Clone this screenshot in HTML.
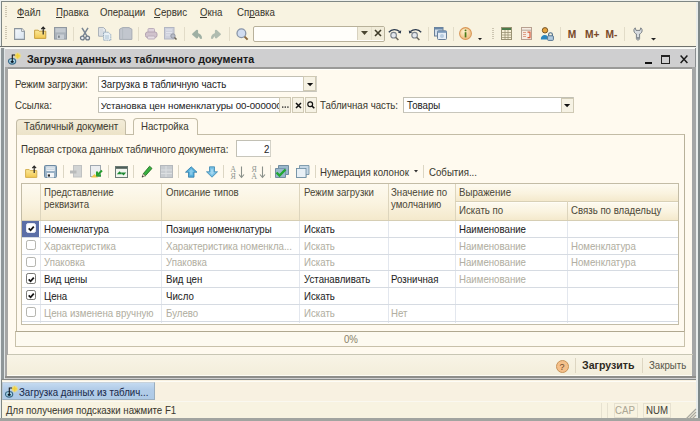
<!DOCTYPE html>
<html><head><meta charset="utf-8"><style>
*{margin:0;padding:0;box-sizing:border-box}
html,body{width:700px;height:421px;overflow:hidden;background:#f8f3e1;font-family:"Liberation Sans",sans-serif;font-size:9.7px;color:#1e1e1e}
.a{position:absolute}
.t{position:absolute;line-height:12px;white-space:nowrap;-webkit-text-stroke:0.05px currentColor}
.g{color:#b2afa2}
.lb{color:#3c3a30}
svg{position:absolute;overflow:visible}
</style></head><body>
<div class="a" style="left:0px;top:0px;width:700px;height:1.2px;background:#eef0ec"></div>
<div class="a" style="left:0px;top:0px;width:1px;height:421px;background:#eaeeee"></div>
<div class="a" style="left:1px;top:1.2px;width:697.2px;height:1px;background:#7f8784"></div>
<div class="a" style="left:1px;top:1.2px;width:1.1px;height:420px;background:#7f8784"></div>
<div class="a" style="left:696.4px;top:2.2px;width:1.6px;height:419px;background:#e8eceb"></div>
<div class="a" style="left:698px;top:1.2px;width:2px;height:420px;background:#7e8889"></div>
<div class="a" style="left:4.5px;top:5.5px;width:2.5px;height:11.5px;background:repeating-linear-gradient(#cdc6b2 0 1px,transparent 1px 2px)"></div>
<div class="t lb" style="left:17px;top:7.40px;font-size:10.4px;transform:scaleX(0.93);transform-origin:0 0;">Файл</div>
<div class="a" style="left:17px;top:17.1px;width:7px;height:1px;background:#3c3a30"></div>
<div class="t lb" style="left:55.6px;top:7.40px;font-size:10.4px;transform:scaleX(0.93);transform-origin:0 0;">Правка</div>
<div class="a" style="left:55.6px;top:17.1px;width:6px;height:1px;background:#3c3a30"></div>
<div class="t lb" style="left:99.6px;top:7.40px;font-size:10.4px;transform:scaleX(0.93);transform-origin:0 0;">Операции</div>
<div class="t lb" style="left:154.4px;top:7.40px;font-size:10.4px;transform:scaleX(0.93);transform-origin:0 0;">Сервис</div>
<div class="a" style="left:154.4px;top:17.1px;width:6px;height:1px;background:#3c3a30"></div>
<div class="t lb" style="left:200px;top:7.40px;font-size:10.4px;transform:scaleX(0.93);transform-origin:0 0;">Окна</div>
<div class="a" style="left:200px;top:17.1px;width:7px;height:1px;background:#3c3a30"></div>
<div class="t lb" style="left:237px;top:7.40px;font-size:10.4px;transform:scaleX(0.93);transform-origin:0 0;">Справка</div>
<div class="a" style="left:249px;top:17.1px;width:6px;height:1px;background:#3c3a30"></div>
<div class="a" style="left:4.5px;top:25.5px;width:2.5px;height:13.5px;background:repeating-linear-gradient(#cdc6b2 0 1px,transparent 1px 2px)"></div>
<div class="a" style="left:72.6px;top:27px;width:1px;height:14px;background:#e2dcc8"></div>
<div class="a" style="left:137.8px;top:27px;width:1px;height:14px;background:#e2dcc8"></div>
<div class="a" style="left:183.8px;top:27px;width:1px;height:14px;background:#e2dcc8"></div>
<div class="a" style="left:228.8px;top:27px;width:1px;height:14px;background:#e2dcc8"></div>
<div class="a" style="left:427.6px;top:27px;width:1px;height:14px;background:#e2dcc8"></div>
<div class="a" style="left:452.7px;top:27px;width:1px;height:14px;background:#e2dcc8"></div>
<div class="a" style="left:559.7px;top:27px;width:1px;height:14px;background:#e2dcc8"></div>
<div class="a" style="left:624.3px;top:27px;width:1px;height:14px;background:#e2dcc8"></div>
<svg style="left:14.3px;top:27.799999999999997px" width="11" height="12" viewBox="0 0 11 12"><defs><linearGradient id="nd" x1="0" y1="0" x2="1" y2="1"><stop offset="0" stop-color="#f4f8fc"/><stop offset="1" stop-color="#d8e4f0"/></linearGradient></defs><path d="M0.6 0.6h7.2l2.6 2.6v8.2H0.6z" fill="url(#nd)" stroke="#8a949c" stroke-width="1.1"/><path d="M7.6 0.6v2.8h2.8" fill="#fff" stroke="#8a949c" stroke-width="0.9"/></svg>
<svg style="left:34px;top:26.4px" width="13" height="13" viewBox="0 0 13 13"><defs><linearGradient id="of" x1="0" y1="0" x2="0" y2="1"><stop offset="0" stop-color="#fbe89a"/><stop offset="1" stop-color="#f2c850"/></linearGradient></defs><path d="M0.6 4.2h3.6l1 1h6.6v7.2H0.6z" fill="url(#of)" stroke="#c8a040" stroke-width="1"/><path d="M9.2 8.5V1.2M7.3 3.2l1.9-2 1.9 2" fill="none" stroke="#222" stroke-width="1.2"/></svg>
<svg style="left:53.6px;top:26.799999999999997px" width="13" height="12.6" viewBox="0 0 13 12.6"><rect x="0.5" y="0.5" width="12" height="11.6" fill="#aab2ba" stroke="#9098a0"/><rect x="1.5" y="1.2" width="10" height="4.2" fill="#c4cad0"/><rect x="3" y="7.5" width="7" height="4.6" fill="#c8ced4"/><rect x="4" y="8.6" width="1.8" height="2.2" fill="#7a8288"/></svg>
<svg style="left:79.8px;top:26.799999999999997px" width="10" height="13.5" viewBox="0 0 10 13.5"><path d="M2 0.8l5 8.4M8 0.8l-5 8.4" stroke="#7a8694" stroke-width="1.5" fill="none"/><circle cx="2.4" cy="11" r="1.9" fill="#eef0f2" stroke="#6e7a88" stroke-width="1.3"/><circle cx="7.6" cy="11" r="1.9" fill="#eef0f2" stroke="#6e7a88" stroke-width="1.3"/></svg>
<svg style="left:98.2px;top:26.799999999999997px" width="13.5" height="13.5" viewBox="0 0 13.5 13.5"><path d="M0.6 0.6h5l2 2v6.6H0.6z" fill="#e4e8ec" stroke="#a6aeb6" stroke-width="1"/><path d="M2 3h3M2 5h4M2 7h4" stroke="#c4ccd4" stroke-width="0.8"/><path d="M5.6 5.2h4.8l2.4 2.4v5.6H5.6z" fill="#e8f0f6" stroke="#8ea4b8" stroke-width="1" stroke-dasharray="1.2 0.6"/><path d="M7 9h4M7 11h4" stroke="#9ab4c8" stroke-width="0.8"/></svg>
<svg style="left:118.6px;top:27.0px" width="13.5" height="13" viewBox="0 0 13.5 13"><path d="M0.6 2.2l3-1.6h6.4l2.9 1.6v10.2H0.6z" fill="#c2c6ce" stroke="#a6acb4" stroke-width="1"/><path d="M3.6 0.6v11.8" stroke="#b0b6be" stroke-width="0.8"/></svg>
<svg style="left:145px;top:27.9px" width="12.5" height="11.5" viewBox="0 0 12.5 11.5"><rect x="3" y="0.5" width="6.5" height="4.5" rx="1" fill="#ddd2dc" stroke="#bcaebb"/><rect x="0.5" y="4" width="11.5" height="5.5" rx="2" fill="#d0c2cc" stroke="#b4a4b2"/><rect x="2.5" y="8" width="7.5" height="3" rx="1" fill="#e6dee4" stroke="#bcaebb"/></svg>
<svg style="left:164.2px;top:27.2px" width="13" height="13" viewBox="0 0 13 13"><rect x="0.5" y="0.5" width="9.5" height="11.5" fill="#cdd0dc" stroke="#b2b6c2"/><path d="M2 3h6M2 5.5h6M2 8h4" stroke="#e2e4ec" stroke-width="1"/><circle cx="9" cy="9" r="2.2" fill="#b8bcc8" stroke="#8a8e98" stroke-width="0.8"/><path d="M10.5 10.5l2 2" stroke="#6a6458" stroke-width="1.6"/></svg>
<svg style="left:192px;top:29.599999999999998px" width="10" height="10" viewBox="0 0 10 10"><path d="M9 8.8c0-3.6-2.6-4.6-5.2-4.6M5 0.8L1.2 4.2 5 7.4z" fill="#9fb0a4" stroke="#9fb0a4" stroke-width="2.2" stroke-linejoin="round"/></svg>
<svg style="left:210.8px;top:29.599999999999998px" width="10" height="10" viewBox="0 0 10 10"><path d="M1 8.8c0-3.6 2.6-4.6 5.2-4.6M5 0.8l3.8 3.4L5 7.4z" fill="#b0bcb0" stroke="#b0bcb0" stroke-width="2.2" stroke-linejoin="round"/></svg>
<svg style="left:235.8px;top:28.0px" width="13" height="13" viewBox="0 0 13 13"><circle cx="5.4" cy="5.2" r="4.4" fill="#d0dcf0" stroke="#8a96a8" stroke-width="1.3"/><path d="M8.6 8.6l3 3" stroke="#8b6a40" stroke-width="2"/></svg>
<div class="a" style="left:252.9px;top:25.8px;width:132px;height:16.2px;background:#fffefa;border:1px solid #b8b19a;border-radius:2px"></div>
<div class="a" style="left:357.3px;top:26.8px;width:1px;height:13.4px;background:#d8d2bf"></div>
<div class="a" style="left:370.6px;top:26.8px;width:1px;height:13.4px;background:#e4dfcc"></div>
<div class="a" style="left:358.3px;top:26.8px;width:12.3px;height:13.4px;background:#f1ecd9"></div>
<div class="a" style="left:371.6px;top:26.8px;width:12.7px;height:13.4px;background:#f1ecd9"></div>
<svg style="left:361px;top:30.9px" width="7" height="4" viewBox="0 0 7 4"><path d="M0 0h7l-3.5 4z" fill="#4a4530"/></svg>
<svg style="left:374px;top:28.9px" width="8" height="8" viewBox="0 0 8 8"><path d="M1 1l6 6M7 1l-6 6" stroke="#3e3a28" stroke-width="1.6"/></svg>
<svg style="left:388px;top:27.799999999999997px" width="14" height="13" viewBox="0 0 14 13"><path d="M0.8 4.2c3-3.2 7.5-3.4 10.8-0.6" fill="none" stroke="#2e3c50" stroke-width="1.3"/><path d="M13.2 2.2l-0.4 3.4-3-1.2z" fill="#2e3c50"/><circle cx="5.6" cy="7.2" r="2.8" fill="#e4e8ee" stroke="#7a828c" stroke-width="1.1"/><path d="M7.6 9.2l2.8 2.8" stroke="#6e6a60" stroke-width="1.6"/></svg>
<svg style="left:407.8px;top:27.799999999999997px" width="14" height="13" viewBox="0 0 14 13"><path d="M13.2 4.2c-3-3.2-7.5-3.4-10.8-0.6" fill="none" stroke="#2e3c50" stroke-width="1.3"/><path d="M0.8 2.2l0.4 3.4 3-1.2z" fill="#2e3c50"/><circle cx="6.6" cy="7.2" r="2.8" fill="#e4e8ee" stroke="#7a828c" stroke-width="1.1"/><path d="M8.6 9.2l2.8 2.8" stroke="#6e6a60" stroke-width="1.6"/></svg>
<svg style="left:434px;top:27.0px" width="13" height="13" viewBox="0 0 13 13"><rect x="0.5" y="0.5" width="8.5" height="8.5" fill="#d4e0ec" stroke="#6a8098"/><rect x="0.5" y="0.5" width="8.5" height="2" fill="#6a88a8"/><rect x="3.5" y="3.8" width="9" height="8.7" rx="1" fill="#e6eef6" stroke="#6a8098"/><rect x="3.5" y="3.8" width="9" height="2" fill="#7a98b8"/><circle cx="8" cy="9" r="2" fill="#b8cce0"/></svg>
<svg style="left:458.5px;top:26.599999999999998px" width="13" height="13" viewBox="0 0 13 13"><defs><radialGradient id="inf" cx="0.4" cy="0.35"><stop offset="0" stop-color="#fff4d0"/><stop offset="1" stop-color="#f2c890"/></radialGradient></defs><circle cx="6.5" cy="6.5" r="5.9" fill="url(#inf)" stroke="#d89858" stroke-width="1.1"/><rect x="5.7" y="5.2" width="1.7" height="5.2" fill="#4a7a1a"/><circle cx="6.55" cy="3.4" r="0.95" fill="#4a7a1a"/></svg>
<svg style="left:478.4px;top:38.0px" width="4" height="2.2" viewBox="0 0 4 2.2"><path d="M0 0h4l-2 2.2z" fill="#222"/></svg>
<div class="a" style="left:492.2px;top:27.5px;width:2px;height:11px;background:repeating-linear-gradient(#cdc6b2 0 1px,transparent 1px 2px)"></div>
<svg style="left:500.6px;top:26.9px" width="11" height="13" viewBox="0 0 11 13"><rect x="0.5" y="0.5" width="10" height="12" fill="#f7efd6" stroke="#9a9274"/><rect x="1" y="1" width="9" height="2" fill="#4a7a4a"/><path d="M1 5.5h9M1 8h9M1 10.5h9M4 3v9M7 3v9" stroke="#9a9274" stroke-width="0.8"/></svg>
<svg style="left:521px;top:26.9px" width="11" height="13" viewBox="0 0 11 13"><rect x="0.5" y="0.5" width="10" height="12" fill="#f6ece2" stroke="#b8a090"/><path d="M1 3.2h9" stroke="#a89888" stroke-width="0.8"/><path d="M2 5.5h3M2 7.5h3M2 9.5h3" stroke="#e0a088" stroke-width="1"/><path d="M6.5 5.2h2.5v5.5h-2.5" fill="none" stroke="#d85a3a" stroke-width="1.2"/></svg>
<svg style="left:540.4px;top:26.599999999999998px" width="14" height="14" viewBox="0 0 14 14"><circle cx="5" cy="3.3" r="2.7" fill="#e6a440" stroke="#6a4a20" stroke-width="0.9"/><path d="M0.8 12.5c0-3 1.5-4.6 4-4.6 1 0 1.8.3 2.4.8v3.8z" fill="#2a86c0"/><path d="M8.6 9V7.6a1.9 1.9 0 0 1 3.8 0V9" fill="none" stroke="#4a6a88" stroke-width="1.1"/><rect x="7.6" y="8.8" width="5.8" height="4.6" rx="0.8" fill="#b4cce0" stroke="#4a6a88" stroke-width="0.9"/></svg>
<div class="t " style="left:567.7px;top:28.50px;font-size:10.2px;font-weight:bold;color:#7a4a2a">M</div>
<div class="t " style="left:585px;top:28.50px;font-size:10.2px;font-weight:bold;color:#7a4a2a">M+</div>
<div class="t " style="left:605.6px;top:28.50px;font-size:10.2px;font-weight:bold;color:#7a4a2a">M-</div>
<svg style="left:632.6px;top:26.799999999999997px" width="10" height="13.4" viewBox="0 0 10 13.4"><path d="M2.2 0.8C0.8 1.8 0.6 3.6 1.2 5c.6 1.2 1.6 1.8 2.2 2v4.6c0 .9.7 1.4 1.6 1.4s1.6-.5 1.6-1.4V7c.6-.2 1.6-.8 2.2-2 .6-1.4.4-3.2-1-4.2L7 3.4H3z" fill="#d8dce0" stroke="#6e757c" stroke-width="0.9" stroke-linejoin="round"/><circle cx="5" cy="11" r="0.9" fill="#6e757c"/></svg>
<svg style="left:650.5px;top:37.6px" width="5" height="2.4" viewBox="0 0 5 2.4"><path d="M0 0h5l-2.5 2.4z" fill="#222"/></svg>
<div class="a" style="left:0px;top:45.9px;width:696.4px;height:1.4px;background:#6f716d"></div>
<div class="a" style="left:0px;top:47.3px;width:696.4px;height:1.8px;background:#f4f4ee"></div>
<div class="a" style="left:1px;top:47.9px;width:2.8px;height:332.1px;background:#8e9698"></div>
<div class="a" style="left:3.8px;top:47.9px;width:1px;height:332.1px;background:#dfe5e6"></div>
<div class="a" style="left:695px;top:47.9px;width:1.2px;height:20px;background:#8a8e90"></div>
<div class="a" style="left:4.8px;top:49.1px;width:690.2px;height:19px;background:#cfcfd0"></div>
<div class="a" style="left:4.8px;top:47.9px;width:690.2px;height:1.2px;background:#fbfbf8"></div>
<div class="a" style="left:4.8px;top:67.4px;width:687px;height:1.5px;background:#9a9a98"></div>
<div class="a" style="left:4.8px;top:67.4px;width:3.1px;height:309px;background:#a6a6a4"></div>
<div class="a" style="left:691.7px;top:67.4px;width:4.3px;height:311px;background:#a4a6a6"></div>
<div class="a" style="left:7.9px;top:68.9px;width:0.5px;height:307px;background:#f2f2ec"></div>
<div class="a" style="left:8.3px;top:68.9px;width:683.4px;height:306.8px;background:#fffaef"></div>
<div class="a" style="left:8.3px;top:68.9px;width:683.4px;height:1.2px;background:#fffffb"></div>
<div class="a" style="left:4.8px;top:375.9px;width:691.2px;height:1.7px;background:#8e8e8a"></div>
<div class="a" style="left:4.8px;top:377.6px;width:691.2px;height:1.1px;background:#cfcfcf"></div>
<div class="a" style="left:1px;top:378.7px;width:695.2px;height:1.4px;background:#858987"></div>
<svg style="left:8.2px;top:52px" width="14" height="13" viewBox="0 0 14 13"><defs><radialGradient id="sg82"><stop offset="0" stop-color="#fff8a0"/><stop offset="0.45" stop-color="#f4dc60"/><stop offset="1" stop-color="#f0e0a0" stop-opacity="0"/></radialGradient></defs><circle cx="9.7" cy="3.9" r="4.2" fill="url(#sg82)"/><path d="M9.7 0.9l0.9 2.1 2.1 0.9-2.1 0.9-0.9 2.1-0.9-2.1-2.1-0.9 2.1-0.9z" fill="#f0d040"/><ellipse cx="4.1" cy="9.3" rx="3.6" ry="2.8" fill="#a6d4e8" stroke="#3a6a88" stroke-width="1.2"/><path d="M4.3 9.3V3h2.8" fill="none" stroke="#1a1a1a" stroke-width="1.1"/><ellipse cx="4.2" cy="9.8" rx="1.7" ry="1.1" fill="#0a1a2a"/></svg>
<div class="t " style="left:26.9px;top:52.90px;font-size:10.7px;font-weight:bold;color:#1a1a1a">Загрузка данных из табличного документа</div>
<div class="a" style="left:645px;top:62px;width:7px;height:1.8px;background:#111"></div>
<div class="a" style="left:660.5px;top:54.6px;width:9.5px;height:9px;border:1.5px solid #222;border-top-width:2px"></div>
<svg style="left:680px;top:55px" width="8" height="8.5" viewBox="0 0 8 8.5"><path d="M0.6 0.6l6.8 7.3M7.4 0.6l-6.8 7.3" stroke="#1a1a1a" stroke-width="1.5"/></svg>
<div class="t lb" style="left:15px;top:79.10px;font-size:10.4px;transform:scaleX(0.93);transform-origin:0 0;">Режим загрузки:</div>
<div class="a" style="left:98px;top:75.7px;width:218.5px;height:16.4px;background:#fff;border:1px solid #c2c0b4;border-right-color:#d4d2c8;border-bottom-color:#c8c6bc"></div>
<div class="t " style="left:100.7px;top:79.10px;font-size:10.4px;transform:scaleX(0.93);transform-origin:0 0;">Загрузка в табличную часть</div>
<div class="a" style="left:303.2px;top:76.2px;width:13px;height:15.2px;background:#f6f2e4;border:1px solid #cfc9b4"></div>
<svg style="left:306.9px;top:83px" width="6.2" height="3.2" viewBox="0 0 6.2 3.2"><path d="M0 0h6.2l-3.1 3.2z" fill="#111"/></svg>
<div class="t lb" style="left:15px;top:100.30px;font-size:10.4px;transform:scaleX(0.93);transform-origin:0 0;">Ссылка:</div>
<div class="a" style="left:98px;top:97.2px;width:181.5px;height:16.2px;background:#fff;border:1px solid #c2c0b4;border-right-color:#d4d2c8;border-bottom-color:#c8c6bc"></div>
<div class="a" style="left:100.7px;top:98px;width:178px;height:14px;overflow:hidden">
<div class="t" style="left:0;top:1.93px">Установка цен номенклатуры 00-000000</div></div>
<div class="a" style="left:279.4px;top:97.2px;width:12px;height:16.2px;background:#f6f2e4;border:1px solid #cfc9b4"></div>
<svg style="left:282.3px;top:106px" width="7" height="2" viewBox="0 0 7 2"><rect x="0" y="0.4" width="1.4" height="1.4" fill="#333"/><rect x="2.6" y="0.4" width="1.4" height="1.4" fill="#333"/><rect x="5.2" y="0.4" width="1.4" height="1.4" fill="#333"/></svg>
<div class="a" style="left:292px;top:97.2px;width:12.3px;height:16.2px;background:#f6f2e4;border:1px solid #cfc9b4"></div>
<svg style="left:294.5px;top:101.5px" width="7" height="7" viewBox="0 0 7 7"><path d="M1 1l5 5M6 1l-5 5" stroke="#111" stroke-width="1.5"/></svg>
<div class="a" style="left:304.6px;top:97.2px;width:12px;height:16.2px;background:#f6f2e4;border:1px solid #cfc9b4"></div>
<svg style="left:306.8px;top:100.8px" width="8" height="8" viewBox="0 0 8 8"><circle cx="3.2" cy="3.2" r="2.4" fill="none" stroke="#111" stroke-width="1.2"/><path d="M5 5l2.3 2.3" stroke="#111" stroke-width="1.6"/></svg>
<div class="t lb" style="left:320px;top:100.30px;font-size:10.4px;transform:scaleX(0.93);transform-origin:0 0;">Табличная часть:</div>
<div class="a" style="left:403.4px;top:97.4px;width:171px;height:16px;background:#fff;border:1px solid #c2c0b4;border-right-color:#d4d2c8;border-bottom-color:#c8c6bc"></div>
<div class="t " style="left:406.9px;top:100.30px;font-size:10.4px;transform:scaleX(0.93);transform-origin:0 0;">Товары</div>
<div class="a" style="left:561px;top:97.9px;width:12.7px;height:15px;background:#f6f2e4;border:1px solid #cfc9b4"></div>
<svg style="left:564.3px;top:104px" width="6.2" height="3.2" viewBox="0 0 6.2 3.2"><path d="M0 0h6.2l-3.1 3.2z" fill="#111"/></svg>
<div class="a" style="left:15.9px;top:134.2px;width:669px;height:197.6px;border:1px solid #c3bca6;border-right-color:#b8b19a;border-bottom-color:#b0a890;background:#fffaef"></div>
<div class="a" style="left:15.9px;top:118.8px;width:110px;height:16px;background:linear-gradient(#f3ecd8,#ece3c8);border:1px solid #c3bca6;border-bottom:none;border-radius:4px 4px 0 0"></div>
<div class="t lb" style="left:24.4px;top:121.30px;font-size:10.4px;transform:scaleX(0.93);transform-origin:0 0;">Табличный документ</div>
<div class="a" style="left:132.9px;top:118.2px;width:65.5px;height:17.2px;background:#fffaef;border:1px solid #c3bca6;border-bottom:none;border-radius:4px 4px 0 0"></div>
<div class="t lb" style="left:141.4px;top:121.30px;font-size:10.4px;transform:scaleX(0.93);transform-origin:0 0;">Настройка</div>
<div class="t lb" style="left:21.4px;top:143.60px;font-size:10.4px;transform:scaleX(0.93);transform-origin:0 0;">Первая строка данных табличного документа:</div>
<div class="a" style="left:235.7px;top:140.3px;width:35.7px;height:16.3px;background:#fff;border:1px solid #c2c0b4;border-right-color:#d4d2c8;border-bottom-color:#c8c6bc"></div>
<div class="t " style="left:263.5px;top:143.60px;font-size:10.4px;transform:scaleX(0.93);transform-origin:0 0;">2</div>
<div class="a" style="left:63px;top:165px;width:1px;height:13px;background:#dcd6c4"></div>
<div class="a" style="left:108.4px;top:165px;width:1px;height:13px;background:#dcd6c4"></div>
<div class="a" style="left:133.4px;top:165px;width:1px;height:13px;background:#dcd6c4"></div>
<div class="a" style="left:178.4px;top:165px;width:1px;height:13px;background:#dcd6c4"></div>
<div class="a" style="left:223px;top:165px;width:1px;height:13px;background:#dcd6c4"></div>
<div class="a" style="left:269.6px;top:165px;width:1px;height:13px;background:#dcd6c4"></div>
<div class="a" style="left:314.6px;top:165px;width:1px;height:13px;background:#dcd6c4"></div>
<div class="a" style="left:423px;top:165px;width:1px;height:13px;background:#dcd6c4"></div>
<svg style="left:25.1px;top:165px" width="13" height="13" viewBox="0 0 13 13"><path d="M0.6 4.6h3.6l1 1h6.6v6.8H0.6z" fill="url(#of)" stroke="#d4b050" stroke-width="1"/><path d="M9.2 8V1.2M7.3 3.2l1.9-2 1.9 2" fill="none" stroke="#2a2a2a" stroke-width="1.2"/></svg>
<svg style="left:44.4px;top:165px" width="13" height="13" viewBox="0 0 13 13"><rect x="0.5" y="0.5" width="12" height="12" rx="1" fill="#9ab2c6" stroke="#6d8aa2"/><rect x="2.3" y="1.4" width="8.4" height="4.6" fill="#eef2f6"/><path d="M3 2.8h7M3 4.4h7" stroke="#b8c8d6" stroke-width="0.7"/><rect x="3" y="8" width="7" height="4.5" fill="#f4f6f8"/><rect x="3.8" y="9.4" width="2.2" height="2.2" fill="#2a2a2a"/></svg>
<svg style="left:69.5px;top:165px" width="12" height="13" viewBox="0 0 12 13"><rect x="3.5" y="0.5" width="8" height="11.5" fill="#d2d4d4" stroke="#c0c2c2"/><path d="M0 7h6.5" stroke="#b8baba" stroke-width="3"/></svg>
<svg style="left:90px;top:165px" width="13" height="13" viewBox="0 0 13 13"><rect x="0.5" y="0.5" width="10" height="11" fill="#eceef0" stroke="#a0a8b0"/><path d="M1 12.5l3.5-3.5 3.5 3.5z" fill="#f0c850"/><path d="M12 5.5l-4.8 4.8M7 6.5v4h4" fill="none" stroke="#28a030" stroke-width="2"/></svg>
<svg style="left:114.8px;top:165.8px" width="13" height="12" viewBox="0 0 13 12"><rect x="0.5" y="0.5" width="12" height="11" fill="#f2f6f0" stroke="#6a7a74"/><rect x="1" y="1" width="11" height="1.8" fill="#4e5e58"/><path d="M1.8 8.2L4.6 5.2 7.4 8.2z" fill="#1e8a34"/><path d="M5.8 6.4h5.4L8.5 9.4z" fill="#1e8a34"/></svg>
<svg style="left:141px;top:165px" width="11" height="13" viewBox="0 0 11 13"><path d="M2.2 8.8L8.6 1.2l2.4 2.2-6.6 7.4z" fill="#38b040" stroke="#1a6a1a" stroke-width="0.8"/><path d="M2.2 8.8l2.2 2L1 12.2z" fill="#f0e8d0" stroke="#5a5a4a" stroke-width="0.6"/><path d="M1 12.2l0.6-1.6 1 1z" fill="#222"/></svg>
<svg style="left:159.8px;top:165px" width="13" height="13" viewBox="0 0 13 13"><rect x="0.5" y="0.5" width="12" height="12" fill="#c8ccd0" stroke="#b4b8bc"/><path d="M1 5h11M1 8.5h11M6 1v11" stroke="#dde0e2" stroke-width="1"/></svg>
<svg style="left:185px;top:165.5px" width="12.5" height="12" viewBox="0 0 12.5 12"><path d="M6.25 0.8L12 6.2H9v5H3.5v-5H0.5z" fill="#58b0dc" stroke="#2f7aa6" stroke-width="0.8" stroke-linejoin="round"/><path d="M6.25 3L9 5.8H7.5v3h-2.5v-3H3.5z" fill="#a8dcf4" opacity="0.6"/></svg>
<svg style="left:205.7px;top:165.5px" width="12" height="12" viewBox="0 0 12 12"><path d="M6 11.2L11.5 5.8H8.5v-5h-5v5H0.5z" fill="#78c0e4" stroke="#3a86b0" stroke-width="0.8" stroke-linejoin="round"/><path d="M6 9L8.5 6.2H7v-3H5v3H3.5z" fill="#c0e6f8" opacity="0.6"/></svg>
<svg style="left:230px;top:164.5px" width="15" height="14" viewBox="0 0 15 14"><text x="0.2" y="6.6" font-size="8" fill="#8f968f" font-family="Liberation Serif">A</text><text x="0.6" y="13.8" font-size="8" fill="#8f968f" font-family="Liberation Serif">Я</text><path d="M11.5 1.5v10.5M9 9.5l2.5 3 2.5-3" fill="none" stroke="#8a908a" stroke-width="1.1"/></svg>
<svg style="left:250.7px;top:164.5px" width="15" height="14" viewBox="0 0 15 14"><text x="0.6" y="6.6" font-size="8" fill="#8f968f" font-family="Liberation Serif">Я</text><text x="0.2" y="13.8" font-size="8" fill="#8f968f" font-family="Liberation Serif">A</text><path d="M11.5 1.5v10.5M9 9.5l2.5 3 2.5-3" fill="none" stroke="#8a908a" stroke-width="1.1"/></svg>
<svg style="left:274.8px;top:165px" width="14.5" height="13" viewBox="0 0 14.5 13"><path d="M3.5 0.5h10v9h-3v3h-10v-9h3z" fill="#9ab8cc" stroke="#5a7a90" stroke-width="0.8"/><path d="M3.5 3.5h7v6" fill="none" stroke="#6a8aa0" stroke-width="0.7"/><path d="M1.5 7.5l3 3 6-6" fill="none" stroke="#22a832" stroke-width="2.4"/></svg>
<svg style="left:296px;top:165px" width="13.5" height="13" viewBox="0 0 13.5 13"><path d="M3.5 0.5h9.5v9h-3v3h-9.5v-9h3z" fill="#c4d6e4" stroke="#6a8aa0" stroke-width="0.8"/><rect x="0.5" y="3.5" width="9.5" height="9" fill="#e8f0f6" stroke="#6a8aa0" stroke-width="0.8"/></svg>
<div class="t lb" style="left:320.4px;top:167.00px;font-size:10.4px;transform:scaleX(0.93);transform-origin:0 0;">Нумерация колонок</div>
<svg style="left:414px;top:170px" width="4" height="2.5" viewBox="0 0 4 2.5"><path d="M0 0h4l-2 2.5z" fill="#333"/></svg>
<div class="t lb" style="left:429px;top:167.00px;font-size:10.4px;transform:scaleX(0.93);transform-origin:0 0;">События...</div>
<div class="a" style="left:21.4px;top:182.6px;width:657.8000000000001px;height:142.20000000000002px;background:#fff;border:1px solid #c3bca6"></div>
<div class="a" style="left:22.4px;top:183.6px;width:432.6px;height:36.5px;background:linear-gradient(#fdfaf0,#faf3df 55%,#f4e9cc)"></div>
<div class="a" style="left:456px;top:183.6px;width:222.20000000000005px;height:17.30000000000001px;background:linear-gradient(#fdfaf0,#faf3df 55%,#f4e9cc)"></div>
<div class="a" style="left:456px;top:201.9px;width:222.20000000000005px;height:18.19999999999999px;background:linear-gradient(#fdfaf0,#faf3df 55%,#f4e9cc)"></div>
<div class="a" style="left:456px;top:201.9px;width:222.20000000000005px;height:1px;background:#fffdf6"></div>
<div class="a" style="left:22.4px;top:219.5px;width:655.8000000000001px;height:1.2px;background:#d6ceb4"></div>
<div class="a" style="left:39.5px;top:183.6px;width:1px;height:36.5px;background:#ddd5bd"></div>
<div class="a" style="left:161.4px;top:183.6px;width:1px;height:36.5px;background:#ddd5bd"></div>
<div class="a" style="left:298.6px;top:183.6px;width:1px;height:36.5px;background:#ddd5bd"></div>
<div class="a" style="left:387.9px;top:183.6px;width:1px;height:36.5px;background:#ddd5bd"></div>
<div class="a" style="left:455px;top:183.6px;width:1px;height:36.5px;background:#ddd5bd"></div>
<div class="a" style="left:455px;top:200.9px;width:223.20000000000005px;height:1px;background:#d8d0b6"></div>
<div class="a" style="left:567px;top:201.4px;width:1px;height:18.69999999999999px;background:#ddd5bd"></div>
<div class="t " style="left:44.2px;top:186.90px;font-size:10.4px;transform:scaleX(0.93);transform-origin:0 0;color:#4e4a3a;-webkit-text-stroke:0.04px">Представление</div>
<div class="t " style="left:44.2px;top:198.60px;font-size:10.4px;transform:scaleX(0.93);transform-origin:0 0;color:#4e4a3a;-webkit-text-stroke:0.04px">реквизита</div>
<div class="t " style="left:165.7px;top:186.90px;font-size:10.4px;transform:scaleX(0.93);transform-origin:0 0;color:#4e4a3a;-webkit-text-stroke:0.04px">Описание типов</div>
<div class="t " style="left:303.6px;top:186.90px;font-size:10.4px;transform:scaleX(0.93);transform-origin:0 0;color:#4e4a3a;-webkit-text-stroke:0.04px">Режим загрузки</div>
<div class="t " style="left:391.4px;top:186.90px;font-size:10.4px;transform:scaleX(0.93);transform-origin:0 0;color:#4e4a3a;-webkit-text-stroke:0.04px">Значение по</div>
<div class="t " style="left:391.4px;top:198.60px;font-size:10.4px;transform:scaleX(0.93);transform-origin:0 0;color:#4e4a3a;-webkit-text-stroke:0.04px">умолчанию</div>
<div class="t " style="left:459.3px;top:186.90px;font-size:10.4px;transform:scaleX(0.93);transform-origin:0 0;color:#4e4a3a;-webkit-text-stroke:0.04px">Выражение</div>
<div class="t " style="left:459.3px;top:205.40px;font-size:10.4px;transform:scaleX(0.93);transform-origin:0 0;color:#4e4a3a;-webkit-text-stroke:0.04px">Искать по</div>
<div class="t " style="left:570.7px;top:205.40px;font-size:10.4px;transform:scaleX(0.93);transform-origin:0 0;color:#4e4a3a;-webkit-text-stroke:0.04px">Связь по владельцу</div>
<div class="a" style="left:39.5px;top:221.1px;width:1px;height:102.20000000000002px;background:#e3e7ee"></div>
<div class="a" style="left:161.4px;top:221.1px;width:1px;height:102.20000000000002px;background:#e3e7ee"></div>
<div class="a" style="left:298.6px;top:221.1px;width:1px;height:102.20000000000002px;background:#e3e7ee"></div>
<div class="a" style="left:387.9px;top:221.1px;width:1px;height:102.20000000000002px;background:#e3e7ee"></div>
<div class="a" style="left:455px;top:221.1px;width:1px;height:102.20000000000002px;background:#e3e7ee"></div>
<div class="a" style="left:567px;top:221.1px;width:1px;height:102.20000000000002px;background:#e3e7ee"></div>
<div class="a" style="left:22.1px;top:221.1px;width:17.1px;height:16.15px;background:#5b6ea6"></div>
<div class="a" style="left:25.5px;top:223.1px;width:10.8px;height:10.2px;background:#fff;border:1px solid #e8ebf4;border-radius:2.2px"></div>
<svg style="left:28px;top:226.29999999999998px" width="6.4" height="5" viewBox="0 0 6.4 5"><path d="M0.7 2.3l1.9 2L5.8 0.6" fill="none" stroke="#151515" stroke-width="1.75"/></svg>
<div class="t " style="left:44.2px;top:223.80px;font-size:10.4px;transform:scaleX(0.93);transform-origin:0 0;">Номенклатура</div>
<div class="t " style="left:165.7px;top:223.80px;font-size:10.4px;transform:scaleX(0.93);transform-origin:0 0;">Позиция номенклатуры</div>
<div class="t " style="left:303.6px;top:223.80px;font-size:10.4px;transform:scaleX(0.93);transform-origin:0 0;">Искать</div>
<div class="t " style="left:459.3px;top:223.80px;font-size:10.4px;transform:scaleX(0.93);transform-origin:0 0;">Наименование</div>
<div class="a" style="left:22.4px;top:236.85px;width:655.8000000000001px;height:1px;background:#d6dbe2"></div>
<div class="a" style="left:25.5px;top:239.85px;width:10.8px;height:10.2px;background:#fff;border:1px solid #b4b4ae;border-radius:2.2px"></div>
<div class="t g" style="left:44.2px;top:240.55px;font-size:10.4px;transform:scaleX(0.93);transform-origin:0 0;">Характеристика</div>
<div class="t g" style="left:165.7px;top:240.55px;font-size:10.4px;transform:scaleX(0.93);transform-origin:0 0;">Характеристика номенкла...</div>
<div class="t g" style="left:303.6px;top:240.55px;font-size:10.4px;transform:scaleX(0.93);transform-origin:0 0;">Искать</div>
<div class="t g" style="left:459.3px;top:240.55px;font-size:10.4px;transform:scaleX(0.93);transform-origin:0 0;">Наименование</div>
<div class="t g" style="left:570.7px;top:240.55px;font-size:10.4px;transform:scaleX(0.93);transform-origin:0 0;">Номенклатура</div>
<div class="a" style="left:22.4px;top:253.6px;width:655.8000000000001px;height:1px;background:#d6dbe2"></div>
<div class="a" style="left:25.5px;top:256.6px;width:10.8px;height:10.2px;background:#fff;border:1px solid #b4b4ae;border-radius:2.2px"></div>
<div class="t g" style="left:44.2px;top:257.30px;font-size:10.4px;transform:scaleX(0.93);transform-origin:0 0;">Упаковка</div>
<div class="t g" style="left:165.7px;top:257.30px;font-size:10.4px;transform:scaleX(0.93);transform-origin:0 0;">Упаковка</div>
<div class="t g" style="left:303.6px;top:257.30px;font-size:10.4px;transform:scaleX(0.93);transform-origin:0 0;">Искать</div>
<div class="t g" style="left:459.3px;top:257.30px;font-size:10.4px;transform:scaleX(0.93);transform-origin:0 0;">Наименование</div>
<div class="t g" style="left:570.7px;top:257.30px;font-size:10.4px;transform:scaleX(0.93);transform-origin:0 0;">Номенклатура</div>
<div class="a" style="left:22.4px;top:270.35px;width:655.8000000000001px;height:1px;background:#d6dbe2"></div>
<div class="a" style="left:25.5px;top:273.35px;width:10.8px;height:10.2px;background:#fff;border:1px solid #7a7a76;border-radius:2.2px"></div>
<svg style="left:28px;top:276.55px" width="6.4" height="5" viewBox="0 0 6.4 5"><path d="M0.7 2.3l1.9 2L5.8 0.6" fill="none" stroke="#151515" stroke-width="1.75"/></svg>
<div class="t " style="left:44.2px;top:274.05px;font-size:10.4px;transform:scaleX(0.93);transform-origin:0 0;">Вид цены</div>
<div class="t " style="left:165.7px;top:274.05px;font-size:10.4px;transform:scaleX(0.93);transform-origin:0 0;">Вид цен</div>
<div class="t " style="left:303.6px;top:274.05px;font-size:10.4px;transform:scaleX(0.93);transform-origin:0 0;">Устанавливать</div>
<div class="t " style="left:391.4px;top:274.05px;font-size:10.4px;transform:scaleX(0.93);transform-origin:0 0;">Розничная</div>
<div class="t g" style="left:459.3px;top:274.05px;font-size:10.4px;transform:scaleX(0.93);transform-origin:0 0;">Наименование</div>
<div class="a" style="left:22.4px;top:287.1px;width:655.8000000000001px;height:1px;background:#d6dbe2"></div>
<div class="a" style="left:25.5px;top:290.1px;width:10.8px;height:10.2px;background:#fff;border:1px solid #7a7a76;border-radius:2.2px"></div>
<svg style="left:28px;top:293.3px" width="6.4" height="5" viewBox="0 0 6.4 5"><path d="M0.7 2.3l1.9 2L5.8 0.6" fill="none" stroke="#151515" stroke-width="1.75"/></svg>
<div class="t " style="left:44.2px;top:290.80px;font-size:10.4px;transform:scaleX(0.93);transform-origin:0 0;">Цена</div>
<div class="t " style="left:165.7px;top:290.80px;font-size:10.4px;transform:scaleX(0.93);transform-origin:0 0;">Число</div>
<div class="t " style="left:303.6px;top:290.80px;font-size:10.4px;transform:scaleX(0.93);transform-origin:0 0;">Искать</div>
<div class="a" style="left:22.4px;top:303.85px;width:655.8000000000001px;height:1px;background:#d6dbe2"></div>
<div class="a" style="left:25.5px;top:306.85px;width:10.8px;height:10.2px;background:#fff;border:1px solid #b4b4ae;border-radius:2.2px"></div>
<div class="t g" style="left:44.2px;top:307.55px;font-size:10.4px;transform:scaleX(0.93);transform-origin:0 0;">Цена изменена вручную</div>
<div class="t g" style="left:165.7px;top:307.55px;font-size:10.4px;transform:scaleX(0.93);transform-origin:0 0;">Булево</div>
<div class="t g" style="left:303.6px;top:307.55px;font-size:10.4px;transform:scaleX(0.93);transform-origin:0 0;">Искать</div>
<div class="t g" style="left:391.4px;top:307.55px;font-size:10.4px;transform:scaleX(0.93);transform-origin:0 0;">Нет</div>
<div class="a" style="left:22.4px;top:320.6px;width:655.8000000000001px;height:1px;background:#d6dbe2"></div>
<div class="a" style="left:15.4px;top:330.8px;width:669.6px;height:16.2px;background:#fdfaf0;border:1px solid #c8c1aa;border-top-color:#b0a890"></div>
<div class="t " style="left:344px;top:334.40px;font-size:10.4px;transform:scaleX(0.93);transform-origin:0 0;color:#8a846c">0%</div>
<div class="a" style="left:7.4px;top:355.2px;width:685px;height:19.6px;background:linear-gradient(#f8f4e6,#f3eedb)"></div>
<div class="a" style="left:7.4px;top:374.8px;width:685px;height:1.1px;background:#fdfcf4"></div>
<div class="a" style="left:7.5px;top:354.1px;width:685px;height:1.1px;background:#c8c6b4"></div>
<svg style="left:555.4px;top:359.8px" width="15" height="13" viewBox="0 0 15 13"><circle cx="7.5" cy="6.5" r="6" fill="#f5c08a" stroke="#c8955a"/><text x="4.6" y="10" font-size="9" fill="#6a4a2a" font-family="Liberation Sans">?</text></svg>
<div class="a" style="left:574.6px;top:358px;width:1px;height:15px;background:#ddd6c2"></div>
<div class="t " style="left:582px;top:359.30px;font-size:10.6px;font-weight:bold;color:#2e2a1e;-webkit-text-stroke:0">Загрузить</div>
<div class="a" style="left:641.6px;top:358px;width:1px;height:15px;background:#ddd6c2"></div>
<div class="t " style="left:648.5px;top:360.30px;font-size:10.4px;transform:scaleX(0.93);transform-origin:0 0;color:#5a584c">Закрыть</div>
<div class="a" style="left:2.5px;top:380.1px;width:693.9px;height:21px;background:#f8f1e1"></div>
<div class="a" style="left:2.5px;top:380.6px;width:693.9px;height:1.2px;background:#fdfcf6"></div>
<div class="a" style="left:2.4px;top:381.6px;width:152.9px;height:18.4px;background:linear-gradient(#c4daf0,#b2cce8 40%,#aecae6);border:1px solid #9aaebf;border-top-color:#c8d2da;border-left-color:#b8c6d2"></div>
<svg style="left:4.8px;top:385px" width="14" height="13" viewBox="0 0 14 13"><defs><radialGradient id="sg48"><stop offset="0" stop-color="#fff8a0"/><stop offset="0.45" stop-color="#f4dc60"/><stop offset="1" stop-color="#f0e0a0" stop-opacity="0"/></radialGradient></defs><circle cx="9.7" cy="3.9" r="4.2" fill="url(#sg48)"/><path d="M9.7 0.9l0.9 2.1 2.1 0.9-2.1 0.9-0.9 2.1-0.9-2.1-2.1-0.9 2.1-0.9z" fill="#f0d040"/><ellipse cx="4.1" cy="9.3" rx="3.6" ry="2.8" fill="#a6d4e8" stroke="#3a6a88" stroke-width="1.2"/><path d="M4.3 9.3V3h2.8" fill="none" stroke="#1a1a1a" stroke-width="1.1"/><ellipse cx="4.2" cy="9.8" rx="1.7" ry="1.1" fill="#0a1a2a"/></svg>
<div class="t " style="left:19.4px;top:386.80px;font-size:10.4px;transform:scaleX(0.93);transform-origin:0 0;color:#1a2a4a">Загрузка данных из таблич...</div>
<div class="a" style="left:2.5px;top:400.7px;width:693.5px;height:1px;background:#faf8f0"></div>
<div class="t lb" style="left:6.4px;top:405.30px;font-size:10.4px;transform:scaleX(0.93);transform-origin:0 0;">Для получения подсказки нажмите F1</div>
<div class="a" style="left:600.5px;top:402.5px;width:1px;height:15px;background:#e6e1d0"></div>
<div class="a" style="left:606.5px;top:402.5px;width:1px;height:15px;background:#e6e1d0"></div>
<div class="a" style="left:613.6px;top:402.5px;width:24.3px;height:15px;border:1px solid #e6e1d0"></div>
<div class="t " style="left:615.2px;top:405.30px;font-size:10.4px;transform:scaleX(0.93);transform-origin:0 0;color:#aca794">CAP</div>
<div class="a" style="left:643px;top:402.5px;width:28px;height:15px;border:1px solid #e6e1d0"></div>
<div class="t " style="left:645.8px;top:405.30px;font-size:10.4px;transform:scaleX(0.93);transform-origin:0 0;color:#45443a">NUM</div>
<div class="a" style="left:0px;top:418.4px;width:700px;height:2.6px;background:#a2a4a0"></div>
<svg style="left:686px;top:408px" width="10" height="11" viewBox="0 0 10 11"><path d="M10 1L0 11M10 4L3 11M10 7L6 11" stroke="#a8a8a0" stroke-width="1.2"/></svg>
</body></html>
